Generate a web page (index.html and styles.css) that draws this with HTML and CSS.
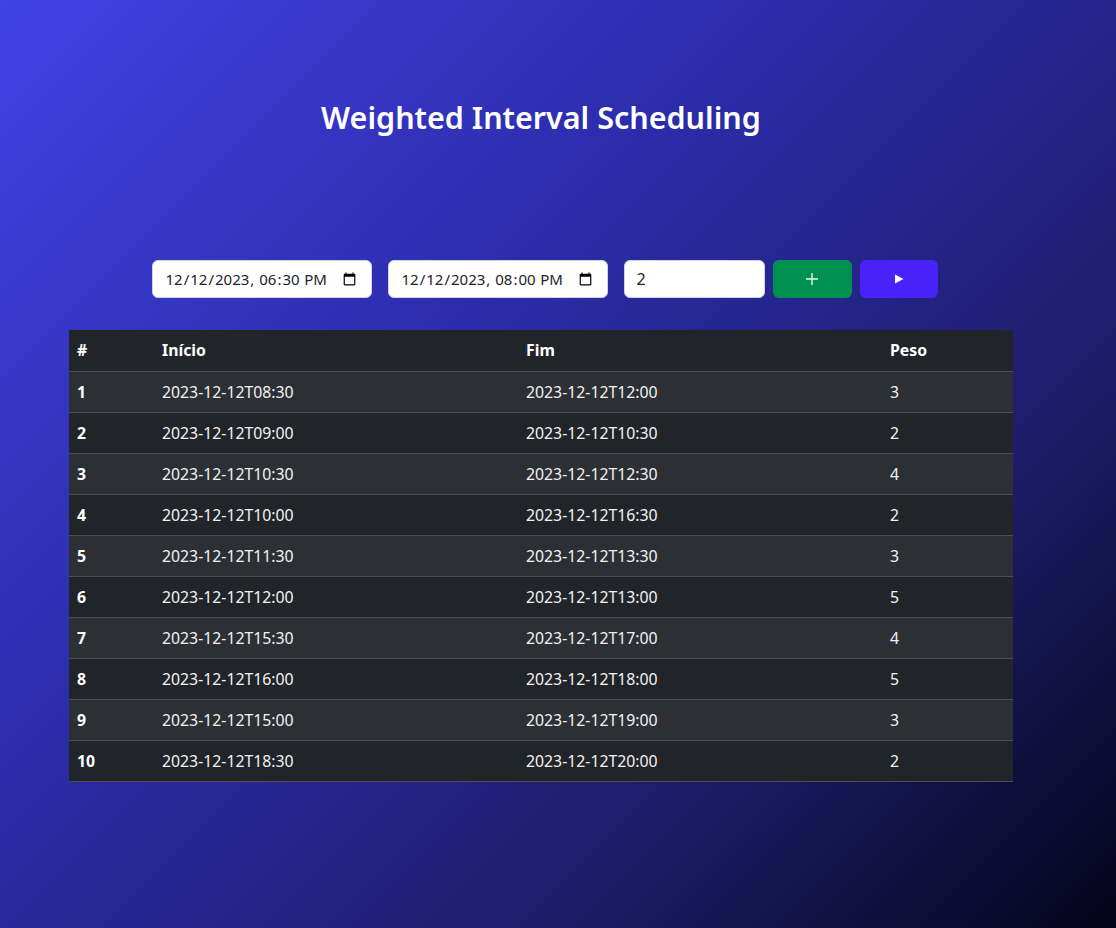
FILE: index.html
```html
<!DOCTYPE html>
<html lang="pt">
<head>
<meta charset="utf-8">
<title>Weighted Interval Scheduling</title>
<link rel="stylesheet" href="styles.css">
</head>
<body>
<main class="page">
  <h1 class="title">Weighted Interval Scheduling</h1>
  <form class="controls" onsubmit="return false">
    <input class="field date" type="datetime-local" value="2023-12-12T18:30">
    <input class="field date second" type="datetime-local" value="2023-12-12T20:00">
    <input class="field num" type="number" value="2">
    <button class="btn add" type="button" aria-label="Adicionar">
      <svg width="14" height="14" viewBox="0 0 14 14"><path d="M7 1v12M1 7h12" stroke="#e8f5ee" stroke-width="1.4" fill="none"/></svg>
    </button>
    <button class="btn run" type="button" aria-label="Executar">
      <svg width="10" height="10" viewBox="0 0 10 10"><path d="M1 0.5L9.5 5L1 9.5Z" fill="#fff"/></svg>
    </button>
  </form>
  <table class="grid">
    <colgroup>
      <col class="c1"><col class="c2"><col class="c3"><col class="c4">
    </colgroup>
    <thead>
      <tr><th>#</th><th>Início</th><th>Fim</th><th>Peso</th></tr>
    </thead>
    <tbody>
      <tr><th>1</th><td>2023-12-12T08:30</td><td>2023-12-12T12:00</td><td>3</td></tr>
      <tr><th>2</th><td>2023-12-12T09:00</td><td>2023-12-12T10:30</td><td>2</td></tr>
      <tr><th>3</th><td>2023-12-12T10:30</td><td>2023-12-12T12:30</td><td>4</td></tr>
      <tr><th>4</th><td>2023-12-12T10:00</td><td>2023-12-12T16:30</td><td>2</td></tr>
      <tr><th>5</th><td>2023-12-12T11:30</td><td>2023-12-12T13:30</td><td>3</td></tr>
      <tr><th>6</th><td>2023-12-12T12:00</td><td>2023-12-12T13:00</td><td>5</td></tr>
      <tr><th>7</th><td>2023-12-12T15:30</td><td>2023-12-12T17:00</td><td>4</td></tr>
      <tr><th>8</th><td>2023-12-12T16:00</td><td>2023-12-12T18:00</td><td>5</td></tr>
      <tr><th>9</th><td>2023-12-12T15:00</td><td>2023-12-12T19:00</td><td>3</td></tr>
      <tr><th>10</th><td>2023-12-12T18:30</td><td>2023-12-12T20:00</td><td>2</td></tr>
    </tbody>
  </table>
</main>
</body>
</html>
```
FILE: styles.css
```css
html, body {
  margin: 0;
  height: 100%;
}
body {
  background: linear-gradient(135deg, #4142e4 0%, #2c2cab 38%, #1d1d6a 72%, #04041a 100%);
  font-family: "Noto Sans", "DejaVu Sans", sans-serif;
  color: #fff;
  overflow: hidden;
}
.page {
  width: 944px;
  margin-left: 69px;
  padding-top: 95px;
}
.title {
  margin: 0;
  text-align: center;
  font-size: 30.5px;
  font-weight: 600;
  line-height: 44px;
  color: #fff;
}
.controls {
  margin-top: 121px;
  display: flex;
  justify-content: center;
  gap: 8px;
  padding-left: 7px;
}
.field {
  box-sizing: border-box;
  height: 38px;
  border: 1px solid #ced4da;
  border-radius: 6px;
  background: #fff;
  color: #212529;
  font-family: "Noto Sans", sans-serif;
  font-size: 16px;
  padding: 0 12px;
}
.date { width: 220px; margin-right: 8px; font-size: 15px; }
.num { width: 141px; }
.btn {
  box-sizing: border-box;
  height: 38px;
  border: 0;
  border-radius: 6px;
  display: flex;
  align-items: center;
  justify-content: center;
}
.add { width: 79px; background: #009150; }
.run { width: 78px; background: #4a22fb; }
.grid {
  margin-top: 32px;
  width: 944px;
  border-collapse: collapse;
  table-layout: fixed;
  font-size: 15.8px;
}
.c1 { width: 85px; }
.c2 { width: 364px; }
.c3 { width: 364px; }
.c4 { width: 131px; }
.grid th, .grid td {
  height: 41px;
  box-sizing: border-box;
  padding: 0 8px;
  text-align: left;
  border-bottom: 1px solid #4a4e52;
  line-height: 24px;
}
.grid th { font-weight: 700; }
.grid td { font-weight: 400; color: #f2f2f2; }
.grid thead tr { background: #212529; }
.grid tbody tr:nth-child(odd) { background: #2c3034; }
.grid tbody tr:nth-child(even) { background: #212529; }
```
